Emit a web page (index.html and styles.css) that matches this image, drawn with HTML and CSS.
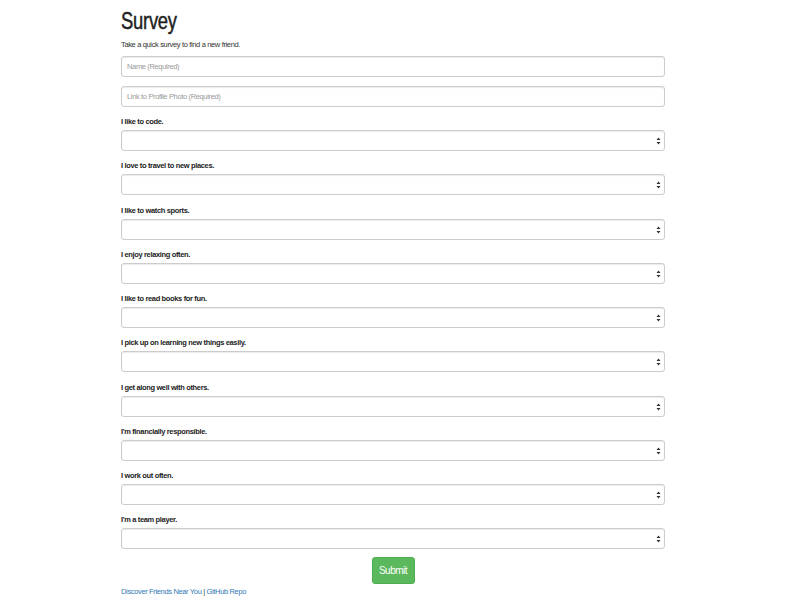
FILE: index.html
```html
<!DOCTYPE html>
<html>
<head>
<meta charset="utf-8">
<title>Survey</title>
<link rel="stylesheet" href="styles.css">
</head>
<body>
<div class="container">
  <h1 class="title"><span class="title-text">Survey</span></h1>
  <p class="lead">Take a quick survey to find a new friend.</p>
  <form class="form">
    <input class="field" type="text" placeholder="Name (Required)">
    <input class="field" type="text" placeholder="Link to Profile Photo (Required)">

    <label class="q">I like to code.</label>
    <div class="sel"><select class="field select"><option></option></select><svg class="arrows" width="5" height="8" viewBox="0 0 5 8"><path d="M0.5 3L2.5 0.5L4.5 3Z M0.5 5L2.5 7.5L4.5 5Z" fill="#333"/></svg></div>

    <label class="q">I love to travel to new places.</label>
    <div class="sel"><select class="field select"><option></option></select><svg class="arrows" width="5" height="8" viewBox="0 0 5 8"><path d="M0.5 3L2.5 0.5L4.5 3Z M0.5 5L2.5 7.5L4.5 5Z" fill="#333"/></svg></div>

    <label class="q">I like to watch sports.</label>
    <div class="sel"><select class="field select"><option></option></select><svg class="arrows" width="5" height="8" viewBox="0 0 5 8"><path d="M0.5 3L2.5 0.5L4.5 3Z M0.5 5L2.5 7.5L4.5 5Z" fill="#333"/></svg></div>

    <label class="q">I enjoy relaxing often.</label>
    <div class="sel"><select class="field select"><option></option></select><svg class="arrows" width="5" height="8" viewBox="0 0 5 8"><path d="M0.5 3L2.5 0.5L4.5 3Z M0.5 5L2.5 7.5L4.5 5Z" fill="#333"/></svg></div>

    <label class="q">I like to read books for fun.</label>
    <div class="sel"><select class="field select"><option></option></select><svg class="arrows" width="5" height="8" viewBox="0 0 5 8"><path d="M0.5 3L2.5 0.5L4.5 3Z M0.5 5L2.5 7.5L4.5 5Z" fill="#333"/></svg></div>

    <label class="q">I pick up on learning new things easily.</label>
    <div class="sel"><select class="field select"><option></option></select><svg class="arrows" width="5" height="8" viewBox="0 0 5 8"><path d="M0.5 3L2.5 0.5L4.5 3Z M0.5 5L2.5 7.5L4.5 5Z" fill="#333"/></svg></div>

    <label class="q">I get along well with others.</label>
    <div class="sel"><select class="field select"><option></option></select><svg class="arrows" width="5" height="8" viewBox="0 0 5 8"><path d="M0.5 3L2.5 0.5L4.5 3Z M0.5 5L2.5 7.5L4.5 5Z" fill="#333"/></svg></div>

    <label class="q">I'm financially responsible.</label>
    <div class="sel"><select class="field select"><option></option></select><svg class="arrows" width="5" height="8" viewBox="0 0 5 8"><path d="M0.5 3L2.5 0.5L4.5 3Z M0.5 5L2.5 7.5L4.5 5Z" fill="#333"/></svg></div>

    <label class="q">I work out often.</label>
    <div class="sel"><select class="field select"><option></option></select><svg class="arrows" width="5" height="8" viewBox="0 0 5 8"><path d="M0.5 3L2.5 0.5L4.5 3Z M0.5 5L2.5 7.5L4.5 5Z" fill="#333"/></svg></div>

    <label class="q">I'm a team player.</label>
    <div class="sel"><select class="field select"><option></option></select><svg class="arrows" width="5" height="8" viewBox="0 0 5 8"><path d="M0.5 3L2.5 0.5L4.5 3Z M0.5 5L2.5 7.5L4.5 5Z" fill="#333"/></svg></div>

    <div class="actions"><button class="btn" type="button">Submit</button></div>
  </form>
  <div class="footer"><a href="#">Discover Friends Near You</a> | <a href="#">GitHub Repo</a></div>
</div>
</body>
</html>
```
FILE: styles.css
```css
html, body {
  margin: 0;
  padding: 0;
  background: #fff;
}
body {
  font-family: "Liberation Sans", Arial, sans-serif;
  color: #333;
  font-size: 7.5px;
  letter-spacing: -0.35px;
}
.container {
  width: 544px;
  margin-left: 121px;
}
.title {
  font-size: 23px;
  font-weight: 500;
  line-height: 24px;
  margin: 9px 0 0 0;
  color: #222;
  letter-spacing: -0.3px;
}
.title-text {
  display: inline-block;
  transform: scaleX(0.8);
  transform-origin: left center;
  -webkit-text-stroke: 0.45px #222;
}
.lead {
  font-size: 7.5px;
  line-height: 12px;
  margin: 6px 0 5px 0;
  color: #333;
}
.form {
  display: flex;
  flex-direction: column;
}
.field {
  box-sizing: border-box;
  width: 544px;
  height: 21px;
  margin: 0 0 9px 0;
  padding: 0 5px;
  border: 1px solid #ccc;
  border-radius: 3px;
  box-shadow: inset 0 1px 1px rgba(0,0,0,0.08);
  font-family: "Liberation Sans", Arial, sans-serif;
  font-size: 7.5px;
  letter-spacing: -0.35px;
  color: #555;
  background: #fff;
  outline: none;
}
.field::placeholder {
  color: #999;
}
.q {
  display: block;
  font-weight: bold;
  font-size: 7.5px;
  line-height: 11px;
  margin: 0 0 3px 0;
  color: #222;
}
.sel {
  position: relative;
  height: 21px;
  margin-bottom: 9.25px;
}
.select {
  appearance: none;
  -webkit-appearance: none;
  margin: 0;
}
.arrows {
  position: absolute;
  right: 4px;
  top: 7px;
}
.actions {
  display: flex;
  justify-content: center;
  margin-top: -2px;
}
.btn {
  width: 43px;
  height: 27px;
  background: #5cb85c;
  border: 1px solid #4cae4c;
  border-radius: 3px;
  color: #fff;
  font-family: "Liberation Sans", Arial, sans-serif;
  font-size: 10px;
  letter-spacing: -0.5px;
  padding: 0;
}
.footer {
  margin-top: 2px;
  font-size: 7.5px;
  line-height: 12px;
  color: #333;
}
.footer a {
  color: #337ab7;
  text-decoration: none;
}
```
